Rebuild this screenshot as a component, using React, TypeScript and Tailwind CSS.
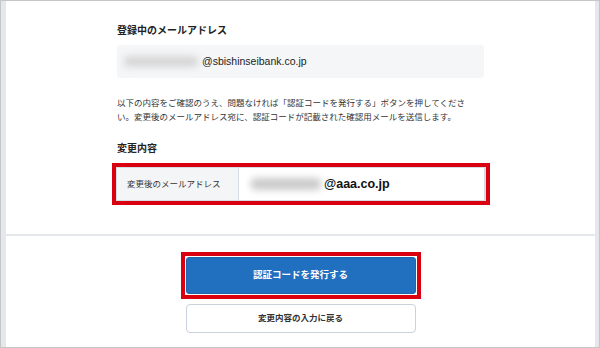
import React from 'react';

const FONT = "font-['Liberation_Sans','Noto_Sans_CJK_JP',sans-serif]";

// Blurred smudge standing in for the masked local part of an address
const Masked: React.FC<{ className?: string }> = ({ className }) => (
  <span aria-hidden className={`inline-block shrink-0 rounded-[4px] blur-[3.5px] ${className ?? ''}`} />
);

const App: React.FC = () => {
  return (
    <div
      className={`${FONT} w-[600px] h-[348px] flex border border-[#c6c6c6] bg-[#e4e7ec] pl-[5px] pr-[4px] overflow-hidden text-[#222]`}
    >
      <div className="flex-1 flex flex-col bg-white">
        {/* confirmation body */}
        <section className="h-[233px] shrink-0 pt-[23px]">
          <div className="w-[367px] mx-auto">
            <h2 className="text-[10px] leading-[14px] font-bold">登録中のメールアドレス</h2>
            <div className="mt-[7px] h-[33px] flex items-center rounded-[3px] bg-[#f5f6f8] pl-[7px] text-[10.5px]">
              <Masked className="w-[74px] h-[11px] mr-[4px] bg-[#d6d6d6]" />
              <span className="text-[#222]">@sbishinseibank.co.jp</span>
            </div>

            <p className="mt-[19px] w-[358px] text-[8.5px] leading-[13.5px] text-[#333]">
              以下の内容をご確認のうえ、問題なければ「認証コードを発行する」ボタンを押してください。変更後のメールアドレス宛に、認証コードが記載された確認用メールを送信します。
            </p>

            <h2 className="mt-[18px] text-[10px] leading-[14px] font-bold">変更内容</h2>

            <div className="mt-[7px] -ml-[5px] w-[378px] border-[4px] border-[#d9000f]">
              <div className="flex h-[34px] border border-[#d6dce4] border-r-2">
                <div className="w-[122px] shrink-0 flex items-center pl-[10px] bg-[#f4f5f7] border-r border-[#d6dce4] text-[8.5px] text-[#333]">
                  変更後のメールアドレス
                </div>
                <div className="flex-1 flex items-center pl-[12px]">
                  <Masked className="w-[70px] h-[12px] mr-[3px] bg-[#cbcbcb]" />
                  <span className="text-[12.5px] font-bold text-[#111]">@aaa.co.jp</span>
                </div>
              </div>
            </div>
          </div>
        </section>

        <div className="h-[2px] shrink-0 bg-[#e4e8ed]" />

        {/* actions */}
        <section className="flex-1 flex flex-col items-center pt-[16px]">
          <div className="border-[4px] border-[#d9000f] p-[1px]">
            <button className="w-[230px] h-[37px] rounded-[3px] bg-[#2170bf] border border-[#1d64ab] text-white text-[9.5px] font-bold">
              認証コードを発行する
            </button>
          </div>
          <button className="mt-[5px] w-[230px] h-[29px] rounded-[4px] border border-[#c8d1dc] bg-white text-[8.5px] font-bold text-[#333]">
            変更内容の入力に戻る
          </button>
        </section>
      </div>
    </div>
  );
};

export default App;
